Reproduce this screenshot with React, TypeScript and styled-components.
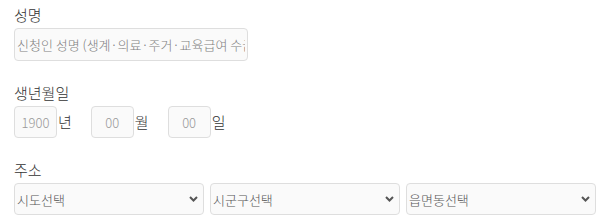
import styled, { createGlobalStyle } from 'styled-components';

const GlobalStyle = createGlobalStyle`
  html, body {
    margin: 0;
    padding: 0;
    background: #ffffff;
  }
  body {
    font-family: 'Noto Sans CJK KR', 'Noto Sans', sans-serif;
    font-weight: 300;
  }
`;

const Form = styled.form`
  display: flex;
  flex-direction: column;
  gap: 21px;
  padding: 4px 14px 0;
`;

const Group = styled.div`
  display: flex;
  flex-direction: column;
  gap: 2px;
`;

const Label = styled.label`
  font-size: 15px;
  line-height: 22px;
  color: #333;
`;

const TextInput = styled.input<{ $w?: number; $h?: number }>`
  box-sizing: border-box;
  width: ${p => p.$w || 234}px;
  height: ${p => p.$h || 33}px;
  padding: 0 2px;
  border: 1px solid #dedede;
  border-radius: 4px;
  background: #fafafa;
  font-family: inherit;
  font-weight: 300;
  font-size: 13px;
  color: #555;
  outline: none;

  &::placeholder {
    color: #808080;
  }
`;

const DateRow = styled.div`
  display: flex;
  align-items: center;
`;

const DateInput = styled(TextInput)`
  text-align: center;
  &::placeholder {
    color: #999;
  }
`;

const Unit = styled.span`
  font-size: 15px;
  line-height: 22px;
  color: #333;
  margin: 0 19px 0 1px;
`;

const SelectRow = styled.div`
  display: flex;
  gap: 6px;
`;

const SelectWrap = styled.div`
  position: relative;
  width: 190px;
  height: 32px;
`;

const Select = styled.select`
  box-sizing: border-box;
  width: 100%;
  height: 100%;
  padding: 0 24px 0 2px;
  border: 1px solid #dedede;
  border-radius: 4px;
  background: #fafafa;
  font-family: inherit;
  font-weight: 300;
  font-size: 13px;
  color: #555;
  appearance: none;
  outline: none;
`;

const Chevron = styled.svg`
  position: absolute;
  right: 6px;
  top: 50%;
  margin-top: -3px;
  pointer-events: none;
`;

const ArrowDown = () => (
  <Chevron width="9" height="6" viewBox="0 0 9 6">
    <polyline points="1,1 4.5,4.5 8,1" fill="none" stroke="#555" strokeWidth="2" />
  </Chevron>
);

const AddressSelect = ({ label }: { label: string }) => (
  <SelectWrap>
    <Select defaultValue="">
      <option value="">{label}</option>
    </Select>
    <ArrowDown />
  </SelectWrap>
);

export default function App() {
  return (
    <>
      <GlobalStyle />
      <Form>
        <Group>
          <Label>성명</Label>
          <TextInput placeholder="신청인 성명 (생계·의료·주거·교육급여 수급자 본인)" />
        </Group>
        <Group>
          <Label>생년월일</Label>
          <DateRow>
            <DateInput $w={43} $h={32} placeholder="1900" />
            <Unit>년</Unit>
            <DateInput $w={43} $h={32} placeholder="00" />
            <Unit>월</Unit>
            <DateInput $w={43} $h={32} placeholder="00" />
            <Unit>일</Unit>
          </DateRow>
        </Group>
        <Group>
          <Label>주소</Label>
          <SelectRow>
            <AddressSelect label="시도선택" />
            <AddressSelect label="시군구선택" />
            <AddressSelect label="읍면동선택" />
          </SelectRow>
        </Group>
      </Form>
    </>
  );
}
